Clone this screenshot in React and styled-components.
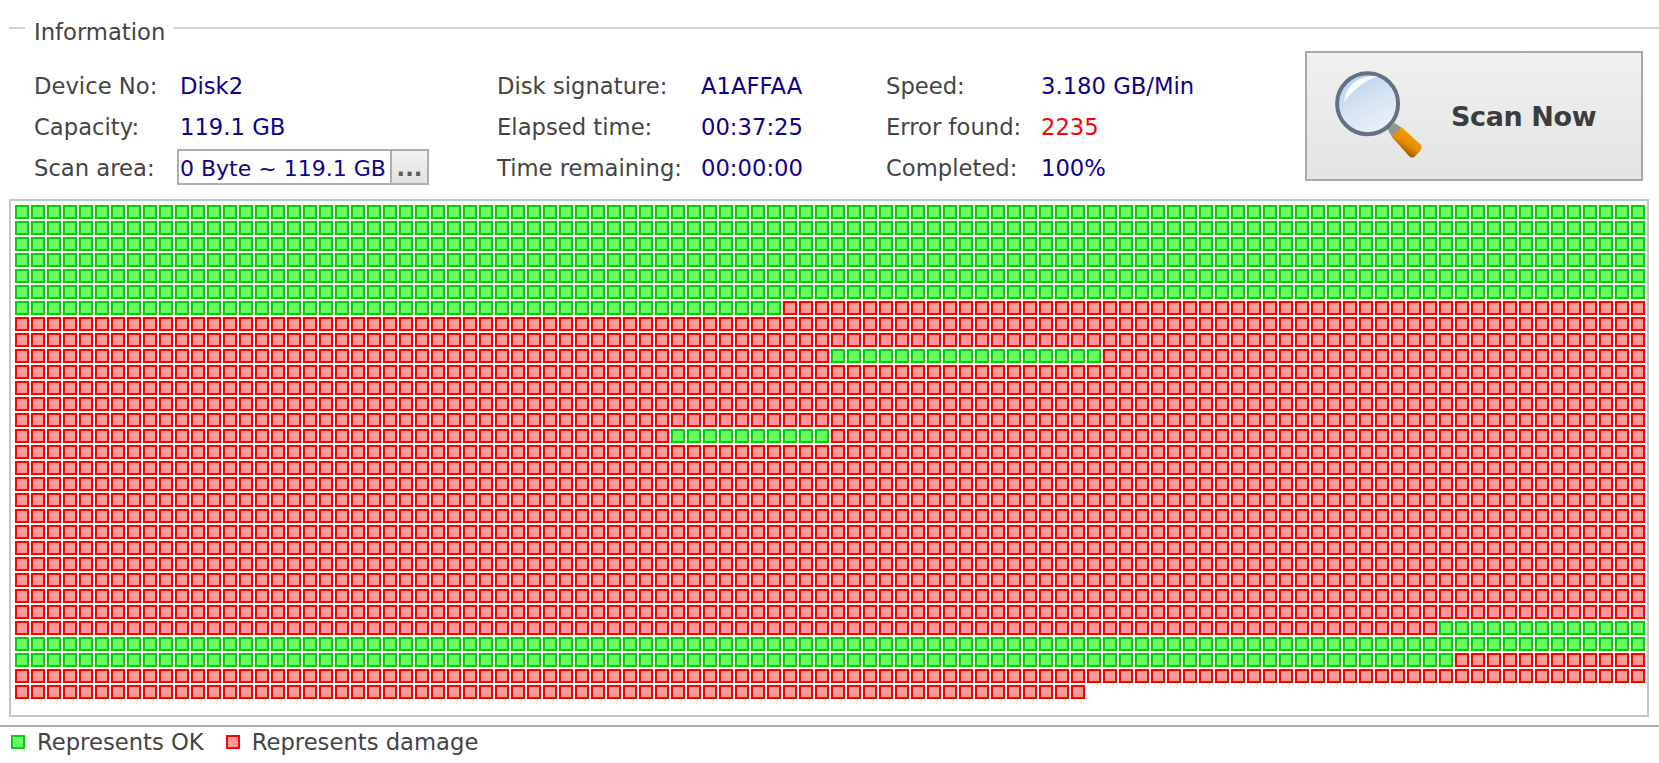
import React from 'react';
import styled, { createGlobalStyle } from 'styled-components';

const COLUMNS = 102;
const ROWS = 31;
const TOTAL_CELLS = 30 * COLUMNS + 67;

// [row, first column, last column] of the sectors that read fine
const OK_RANGES = [
  [0, 0, 101], [1, 0, 101], [2, 0, 101], [3, 0, 101], [4, 0, 101], [5, 0, 101],
  [6, 0, 47],
  [9, 51, 67],
  [14, 41, 50],
  [26, 89, 101],
  [27, 0, 101],
  [28, 0, 89],
];

const isOk = (index) => {
  const row = Math.floor(index / COLUMNS);
  const col = index % COLUMNS;
  return OK_RANGES.some(([r, from, to]) => r === row && col >= from && col <= to);
};

const cells = Array.from({ length: TOTAL_CELLS }, (_, i) => isOk(i));

const infoColumns = [
  {
    width: 463,
    labelWidth: 146,
    rows: [
      { label: 'Device No:', value: 'Disk2' },
      { label: 'Capacity:', value: '119.1 GB' },
      { label: 'Scan area:', range: '0 Byte ~ 119.1 GB' },
    ],
  },
  {
    width: 389,
    labelWidth: 204,
    rows: [
      { label: 'Disk signature:', value: 'A1AFFAA' },
      { label: 'Elapsed time:', value: '00:37:25' },
      { label: 'Time remaining:', value: '00:00:00' },
    ],
  },
  {
    width: 419,
    labelWidth: 155,
    rows: [
      { label: 'Speed:', value: '3.180 GB/Min' },
      { label: 'Error found:', value: '2235', error: true },
      { label: 'Completed:', value: '100%' },
    ],
  },
];

const MagnifierIcon = () => (
  <svg width="100" height="106" viewBox="0 3 100 106">
    <defs>
      <linearGradient id="lens" x1="0.2" y1="0" x2="0.7" y2="1">
        <stop offset="0" stopColor="#b4d0ee" />
        <stop offset="0.5" stopColor="#d6e3f2" />
        <stop offset="1" stopColor="#eef1f7" />
      </linearGradient>
      <linearGradient id="grip" x1="0.75" y1="0.1" x2="0.25" y2="0.9">
        <stop offset="0" stopColor="#f8a800" />
        <stop offset="0.55" stopColor="#e48c00" />
        <stop offset="1" stopColor="#6e4512" />
      </linearGradient>
    </defs>
    <path d="M54 68 L62 63 L69 68 L59 77 Z" fill="#98978f" />
    <path d="M58.7 76.7 L68.7 67.3 L88 85 Q89.5 88 87 91 L82 96.5 Q79 99 76 96 Z" fill="url(#grip)" />
    <circle cx="34.6" cy="43.7" r="30.5" fill="url(#lens)" stroke="#666f88" strokeWidth="4" />
    <path d="M11 42 C13 25 25 15 45 16 C33 20 21 29 11 42 Z" fill="#ffffff" opacity="0.85" />
  </svg>
);

const App = () => {
  return (
    <Page>
      <GlobalStyle />
      <GroupHeader>
        <GroupLineShort />
        <GroupTitle>Information</GroupTitle>
        <GroupLine />
      </GroupHeader>

      <InfoSection>
        {infoColumns.map((column) => (
          <InfoColumn key={column.labelWidth} $width={column.width}>
            {column.rows.map((row) => (
              <InfoRow key={row.label} $labelWidth={column.labelWidth}>
                <Label>{row.label}</Label>
                {row.range ? (
                  <RangeField>
                    <RangeText>{row.range}</RangeText>
                    <RangeButton>...</RangeButton>
                  </RangeField>
                ) : (
                  <Value $error={row.error}>{row.value}</Value>
                )}
              </InfoRow>
            ))}
          </InfoColumn>
        ))}
        <ScanButton>
          <MagnifierIcon />
          <ScanLabel>Scan Now</ScanLabel>
        </ScanButton>
      </InfoSection>

      <SectorFrame>
        <SectorGrid>
          {cells.map((ok, i) => (
            <Sector key={i} $ok={ok} />
          ))}
        </SectorGrid>
      </SectorFrame>

      <Legend>
        <LegendItem>
          <Sector $ok />
          <LegendText>Represents OK</LegendText>
        </LegendItem>
        <LegendItem>
          <Sector />
          <LegendText>Represents damage</LegendText>
        </LegendItem>
      </Legend>
    </Page>
  );
};

const GlobalStyle = createGlobalStyle`
  html, body {
    margin: 0;
    background: #fff;
  }
`;

const Page = styled.div`
  width: 1659px;
  height: 763px;
  overflow: hidden;
  font-family: "DejaVu Sans", Verdana, sans-serif;
  font-size: 22.7px;
  color: #444;
`;

const GroupHeader = styled.div`
  display: flex;
  height: 51px;
  padding: 27px 0 0 9px;
  box-sizing: border-box;
`;

const GroupLineShort = styled.div`
  width: 16px;
  height: 2px;
  background: #d2d2d2;
`;

const GroupTitle = styled.div`
  margin: -8px 9px 0;
  height: 26px;
  line-height: 26px;
  white-space: nowrap;
`;

const GroupLine = styled.div`
  flex: 1;
  height: 2px;
  background: #d2d2d2;
`;

const InfoSection = styled.div`
  display: flex;
  align-items: flex-start;
  height: 148px;
  padding-left: 34px;
`;

const InfoColumn = styled.div`
  width: ${(p) => p.$width}px;
  padding-top: 15px;
  display: grid;
  grid-template-rows: 40px 41px 41px;
`;

const InfoRow = styled.div`
  display: grid;
  grid-template-columns: ${(p) => p.$labelWidth}px 1fr;
  align-items: center;
  white-space: nowrap;
`;

const Label = styled.span`
  color: #444;
`;

const Value = styled.span`
  color: ${(p) => (p.$error ? '#ff0000' : '#10008c')};
`;

const RangeField = styled.div`
  display: flex;
  width: 252px;
  height: 36px;
  margin: -2px 0 0 -3px;
  box-sizing: border-box;
  border: 2px solid #aeaeae;
`;

const RangeText = styled.div`
  flex: 1;
  padding-left: 1px;
  font-size: 22px;
  line-height: 36px;
  color: #10008c;
  white-space: nowrap;
`;

const RangeButton = styled.div`
  width: 37px;
  border-left: 2px solid #aeaeae;
  box-sizing: border-box;
  background: linear-gradient(#f2f2f2, #e2e2e2);
  color: #6b5a4a;
  font-weight: bold;
  text-align: center;
  line-height: 34px;
`;

const ScanButton = styled.div`
  width: 338px;
  height: 130px;
  box-sizing: border-box;
  border: 2px solid #a9a9a9;
  background: linear-gradient(#f0f0f0, #e4e4e4);
  display: flex;
  align-items: center;
  padding-left: 26px;
  gap: 18px;
`;

const ScanLabel = styled.span`
  font-weight: bold;
  font-size: 27px;
  letter-spacing: -0.4px;
  color: #3c3c3c;
  white-space: nowrap;
`;

const SectorFrame = styled.div`
  margin-left: 9px;
  width: 1640px;
  height: 518px;
  box-sizing: border-box;
  border: 2px solid #c2c6c9;
  padding: 4px;
`;

const SectorGrid = styled.div`
  display: grid;
  grid-template-columns: repeat(${COLUMNS}, 14px);
  grid-template-rows: repeat(${ROWS}, 14px);
  gap: 2px;
`;

const Sector = styled.div`
  width: 14px;
  height: 14px;
  box-sizing: border-box;
  border: 2px solid ${(p) => (p.$ok ? '#0ccd0c' : '#ff0000')};
  background: ${(p) => (p.$ok ? '#66ff66' : '#ff9999')};
`;

const Legend = styled.div`
  margin-top: 8px;
  border-top: 2px solid #aeaeae;
  display: flex;
  padding: 8px 0 0 11px;
  gap: 22px;
`;

const LegendItem = styled.div`
  display: flex;
  align-items: center;
  gap: 12px;
  height: 14px;
`;

const LegendText = styled.span`
  white-space: nowrap;
`;

export default App;
